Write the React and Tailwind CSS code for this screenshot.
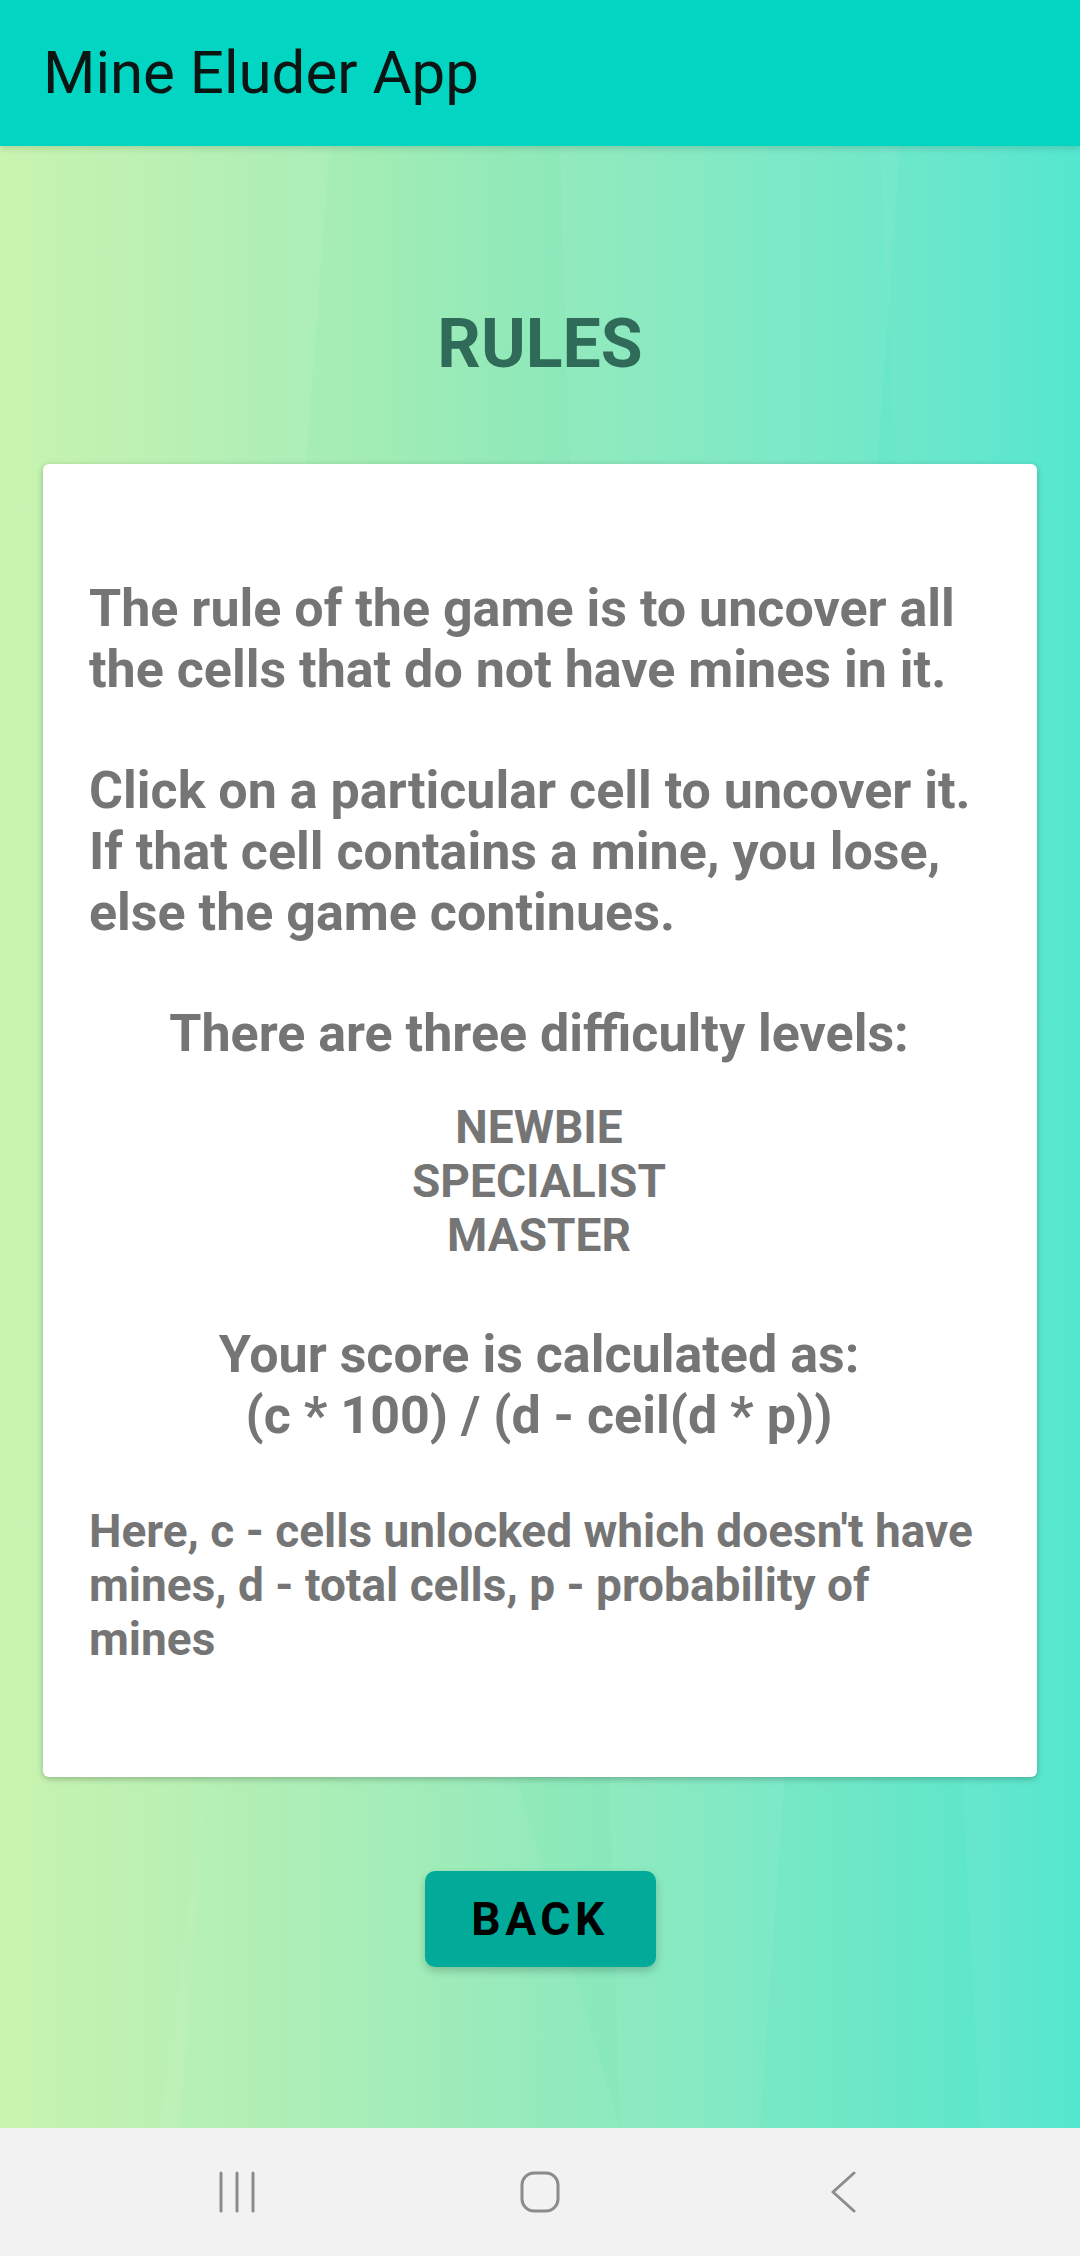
import React from "react";

const levels = ["NEWBIE", "SPECIALIST", "MASTER"];

const NavBar = () => (
  <div className="flex h-[128px] items-center justify-center gap-[263px] bg-[#f2f2f2]">
    {/* recent apps */}
    <svg width="40" height="42" viewBox="0 0 40 42" fill="none" stroke="#8c8c8c" strokeWidth="3" strokeLinecap="round">
      <path d="M4 2v38M20 2v38M36 2v38" />
    </svg>
    {/* home */}
    <svg width="40" height="42" viewBox="0 0 40 42" fill="none" stroke="#8c8c8c" strokeWidth="3">
      <rect x="2" y="2" width="36" height="38" rx="12" />
    </svg>
    {/* back */}
    <svg width="40" height="42" viewBox="0 0 40 42" fill="none" stroke="#8c8c8c" strokeWidth="3" strokeLinecap="round" strokeLinejoin="round">
      <path d="M31 2L10 21l21 19" />
    </svg>
  </div>
);

const App = () => {
  return (
    <div className="flex h-[2256px] w-[1080px] flex-col overflow-hidden font-['Roboto',sans-serif]">
      {/* Toolbar */}
      <div className="relative z-10 flex h-[146px] shrink-0 items-center bg-[#02d5c1] pl-[43px] shadow-[0_3px_6px_rgba(0,0,0,0.12)]">
        <h1 className="text-[60px] leading-none font-normal text-[#0b1513]">Mine Eluder App</h1>
      </div>

      {/* Content */}
      <div className="relative flex flex-1 flex-col items-center bg-gradient-to-r from-[#c6f4ab] via-[#8fe9b9] to-[#4ee6cf]">
        {/* faint low-poly facets */}
        <svg className="absolute inset-0 h-full w-full" viewBox="0 0 1080 1982" preserveAspectRatio="none">
          <polygon points="0,0 330,0 180,1982 0,1982" fill="#ffffff" opacity="0.06" />
          <polygon points="560,0 900,0 760,1982 620,1982" fill="#ffffff" opacity="0.05" />
          <polygon points="880,0 1080,0 1080,1982 980,1982" fill="#ffffff" opacity="0.04" />
          <polygon points="300,900 620,1982 160,1982" fill="#ffffff" opacity="0.05" />
        </svg>

        <h2 className="relative mt-[164px] text-[68px] leading-[68px] font-bold text-[#2f6b58]">RULES</h2>

        <div className="relative mt-[86px] h-[1313px] w-[994px] rounded-[6px] bg-white pl-[46px] pr-[48px] pt-[114px] text-[#757575] font-bold shadow-[0_2px_6px_rgba(0,0,0,0.25)]">
          <p className="text-[52px] leading-[61px]">
            The rule of the game is to uncover all the cells that do not have mines in it.
          </p>
          <p className="mt-[60px] text-[52px] leading-[61px]">
            Click on a particular cell to uncover it. If that cell contains a mine, you lose, else the game continues.
          </p>
          <p className="mt-[60px] text-center text-[52px] leading-[61px]">There are three difficulty levels:</p>
          <div className="mt-[36px] flex flex-col items-center text-[46px] leading-[54px]">
            {levels.map((level) => (
              <span key={level}>{level}</span>
            ))}
          </div>
          <p className="mt-[62px] text-center text-[52px] leading-[61px]">
            Your score is calculated as:
            <br />
            (c * 100) / (d - ceil(d * p))
          </p>
          <p className="mt-[58px] text-[46px] leading-[54px]">
            Here, c - cells unlocked which doesn't have mines, d - total cells, p - probability of mines
          </p>
        </div>

        <button className="relative mt-[94px] h-[96px] w-[231px] rounded-[10px] bg-[#02aa9a] text-[46px] font-bold tracking-[0.1em] text-black shadow-[0_4px_8px_rgba(0,0,0,0.2)]">
          BACK
        </button>
      </div>

      <NavBar />
    </div>
  );
};

export default App;
